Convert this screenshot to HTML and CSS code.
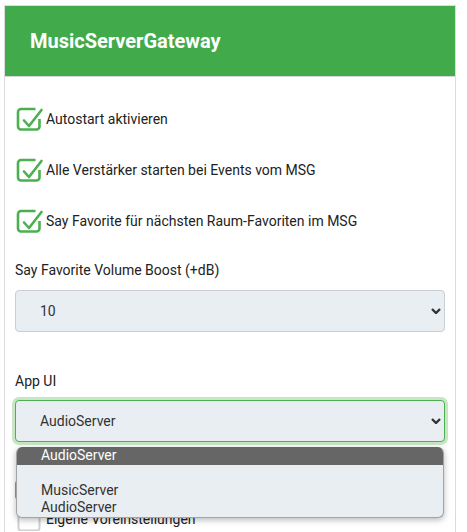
FILE: index.html
```html
<!DOCTYPE html>
<html>
<head>
<meta charset="utf-8">
<link rel="stylesheet" href="styles.css">
</head>
<body>
<div class="card">
  <div class="header">MusicServerGateway</div>
  <div class="content">
    <div class="checks">
      <div class="check-row">
        <svg class="cb" width="28" height="26" viewBox="0 0 28 26"><path class="box" d="M19.5 4H5a3 3 0 0 0-3 3V21.5a3 3 0 0 0 3 3H20.5a3 3 0 0 0 3-3V14"/><path class="tick" d="M8 15.5l5 5.5L25.5 5"/></svg>
        <span>Autostart aktivieren</span>
      </div>
      <div class="check-row">
        <svg class="cb" width="28" height="26" viewBox="0 0 28 26"><path class="box" d="M19.5 4H5a3 3 0 0 0-3 3V21.5a3 3 0 0 0 3 3H20.5a3 3 0 0 0 3-3V14"/><path class="tick" d="M8 15.5l5 5.5L25.5 5"/></svg>
        <span>Alle Verstärker starten bei Events vom MSG</span>
      </div>
      <div class="check-row">
        <svg class="cb" width="28" height="26" viewBox="0 0 28 26"><path class="box" d="M19.5 4H5a3 3 0 0 0-3 3V21.5a3 3 0 0 0 3 3H20.5a3 3 0 0 0 3-3V14"/><path class="tick" d="M8 15.5l5 5.5L25.5 5"/></svg>
        <span>Say Favorite für nächsten Raum-Favoriten im MSG</span>
      </div>
    </div>

    <div class="field first-field">
      <div class="label">Say Favorite Volume Boost (+dB)</div>
      <div class="select">
        <span>10</span>
        <svg class="chev" width="10" height="6" viewBox="0 0 10 6"><path d="M1 1l4 4 4-4"/></svg>
      </div>
    </div>

    <div class="field second-field">
      <div class="label">App UI</div>
      <div class="select focused">
        <span>AudioServer</span>
        <svg class="chev" width="10" height="6" viewBox="0 0 10 6"><path d="M1 1l4 4 4-4"/></svg>
      </div>
    </div>

    <div class="hidden-row"><div class="orange-box"></div></div>

    <div class="check-row unchecked-row">
      <svg class="cb" width="28" height="26" viewBox="0 0 28 26"><rect class="box grey" x="2.5" y="4.5" width="21" height="21" rx="2.5"/></svg>
      <span>Eigene Voreinstellungen</span>
    </div>
  </div>
</div>

<div class="dropdown">
  <div class="opt selected">AudioServer</div>
  <div class="opt"></div>
  <div class="opt">MusicServer</div>
  <div class="opt">AudioServer</div>
</div>
</body>
</html>
```
FILE: styles.css
```css
html, body {
  margin: 0;
  padding: 0;
  background: #ffffff;
  overflow: hidden;
  height: 532px;
}
body {
  font-family: Roboto, "Liberation Sans", Arial, sans-serif;
  color: #222222;
  font-size: 14px;
}
.card {
  margin: 5px 0 0 4px;
  width: 452px;
  height: 527px;
  overflow: hidden;
  box-sizing: border-box;
  border: 1px solid #dcdcdc;
  border-bottom: none;
}
.header {
  height: 70px;
  background: #41aa4b;
  color: #ffffff;
  font-weight: 700;
  font-size: 20px;
  display: flex;
  align-items: center;
  padding-left: 25px;
  border-bottom: 1px solid #d6d6d6;
}
.content {
  padding: 28px 10px 0 10px;
  display: flex;
  flex-direction: column;
}
.checks {
  display: flex;
  flex-direction: column;
  gap: 25px;
}
.check-row {
  display: flex;
  align-items: center;
  height: 26px;
  padding-left: 1px;
}
.check-row span {
  margin-left: 2px;
  line-height: 17px;
  padding-top: 2px;
}
.cb {
  display: block;
  flex: none;
}
.cb .box {
  fill: none;
  stroke: #4caf50;
  stroke-width: 2.6;
}
.cb .box.grey {
  stroke: #d0d0d0;
  stroke-width: 2;
}
.cb .tick {
  fill: none;
  stroke: #4caf50;
  stroke-width: 2.6;
  stroke-linecap: round;
  stroke-linejoin: round;
}
.field {
  display: flex;
  flex-direction: column;
}
.first-field {
  margin-top: 29px;
}
.second-field {
  margin-top: 41px;
}
.label {
  line-height: 17px;
  margin-bottom: 11px;
}
.second-field .label {
  margin-bottom: 10px;
}
.select {
  position: relative;
  height: 42px;
  box-sizing: border-box;
  background: #e9eef2;
  border: 1px solid #c9ced4;
  border-radius: 4px;
  display: flex;
  align-items: center;
  padding-left: 24px;
  color: #333333;
}
.select.focused {
  border-color: #4caf50;
  box-shadow: 0 0 0 3px #c8e6c3;
}
.chev {
  position: absolute;
  right: 3px;
  top: 17px;
}
.chev path {
  fill: none;
  stroke: #333333;
  stroke-width: 2.4;
}
.hidden-row {
  margin-top: 38px;
  height: 22px;
}
.orange-box {
  width: 22px;
  height: 20px;
  box-sizing: border-box;
  border: 2px solid #c98a5e;
  border-radius: 4px;
}
.unchecked-row {
  margin-top: 3px;
}
.dropdown {
  position: absolute;
  left: 16px;
  top: 447px;
  width: 428px;
  box-sizing: border-box;
  background: #e9eef2;
  border: 1px solid #a3a3a3;
  border-top: none;
  border-radius: 6px;
  overflow: hidden;
  box-shadow: 0 2px 6px rgba(0, 0, 0, 0.28);
  color: #333333;
}
.opt {
  height: 17px;
  line-height: 17px;
  padding-left: 24px;
  font-size: 14px;
}
.opt:last-child {
  height: 18px;
}
.opt.selected {
  height: 18px;
  line-height: 16px;
  background: #666666;
  color: #ffffff;
}
```
